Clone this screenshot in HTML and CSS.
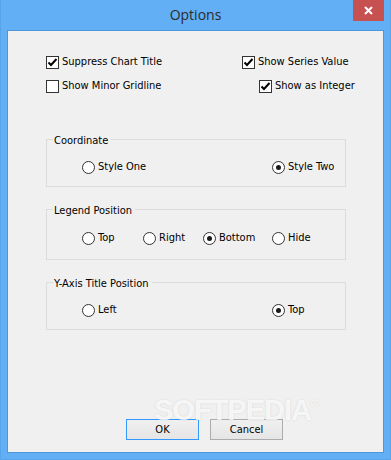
FILE: index.html
```html
<!DOCTYPE html>
<html lang="en">
<head>
    <meta charset="UTF-8">
    <meta name="viewport" content="width=device-width, initial-scale=1.0">
    <title>Options</title>
    <link rel="stylesheet" href="styles.css">
</head>
<body>

<div class="window">
    <div class="titlebar">
        <div class="title">Options</div>
        <button class="close" aria-label="Close">
            <svg width="9" height="9" viewBox="0 0 9 9"><path d="M1 1 L8 8 M8 1 L1 8" stroke="#fff" stroke-width="2" fill="none"/></svg>
        </button>
    </div>

    <div class="panel">
        <div class="checks">
            <label class="check"><span class="box"><svg width="11" height="11" viewBox="0 0 11 11"><path d="M1.5 5.5 L4 8 L9.5 2" stroke="#000" stroke-width="2" fill="none"/></svg></span>Suppress Chart Title</label>
            <label class="check"><span class="box"><svg width="11" height="11" viewBox="0 0 11 11"><path d="M1.5 5.5 L4 8 L9.5 2" stroke="#000" stroke-width="2" fill="none"/></svg></span>Show Series Value</label>
            <label class="check"><span class="box"></span>Show Minor Gridline</label>
            <label class="check indent"><span class="box"><svg width="11" height="11" viewBox="0 0 11 11"><path d="M1.5 5.5 L4 8 L9.5 2" stroke="#000" stroke-width="2" fill="none"/></svg></span>Show as Integer</label>
        </div>

        <div class="group">
            <div class="group-title">Coordinate</div>
            <div class="radios two">
                <label class="radio"><span class="dot"></span>Style One</label>
                <label class="radio"><span class="dot on"></span>Style Two</label>
            </div>
        </div>

        <div class="group tall">
            <div class="group-title">Legend Position</div>
            <div class="radios four">
                <label class="radio"><span class="dot"></span>Top</label>
                <label class="radio"><span class="dot"></span>Right</label>
                <label class="radio"><span class="dot on"></span>Bottom</label>
                <label class="radio"><span class="dot"></span>Hide</label>
            </div>
        </div>

        <div class="group">
            <div class="group-title">Y-Axis Title Position</div>
            <div class="radios two">
                <label class="radio"><span class="dot"></span>Left</label>
                <label class="radio"><span class="dot on"></span>Top</label>
            </div>
        </div>

        <div class="buttons">
            <button class="btn default">OK</button>
            <button class="btn">Cancel</button>
        </div>

        <div class="watermark">SOFTPEDIA<sup>®</sup></div>
    </div>
</div>

</body>
</html>
```

FILE: styles.css
```css
body {
    margin: 0;
    font-family: 'DejaVu Sans Condensed', 'DejaVu Sans', sans-serif;
    font-stretch: condensed;
    font-size: 11px;
    color: #000;
}

.window {
    width: 391px;
    height: 460px;
    box-sizing: border-box;
    background-color: #62aff5;
    border: 1px solid #58a4ea;
    border-top: none;
    display: flex;
    flex-direction: column;
}

.titlebar {
    height: 30px;
    display: grid;
    grid-template-columns: 1fr auto 1fr;
}

.title {
    grid-column: 2;
    font-family: 'Open Sans', sans-serif;
    font-stretch: normal;
    font-size: 14px;
    line-height: 30px;
    color: #2b2b2b;
}

.close {
    grid-column: 3;
    justify-self: end;
    align-self: start;
    width: 31px;
    height: 21px;
    margin-right: 6px;
    padding: 0;
    border: none;
    background-color: #c75050;
    display: flex;
    justify-content: center;
    align-items: center;
}

.panel {
    position: relative;
    flex: 1;
    margin: 0 6px 6px 6px;
    border: 1px solid #4e96da;
    background-color: #f0f0f0;
    display: flex;
    flex-direction: column;
    padding-left: 38px;
}

.checks {
    display: grid;
    grid-template-columns: 196px auto;
    row-gap: 10px;
    padding-top: 24px;
}

.check,
.radio {
    display: flex;
    align-items: center;
    gap: 3px;
    height: 14px;
    line-height: 14px;
    white-space: nowrap;
}

.indent {
    margin-left: 17px;
}

.box {
    width: 11px;
    height: 11px;
    border: 1px solid #333;
    background-color: #fff;
    display: flex;
}

.group {
    width: 300px;
    box-sizing: border-box;
    border: 1px solid #dcdcdc;
    margin-top: 22px;
    padding: 0 0 12px 35px;
}

.checks + .group {
    margin-top: 46px;
}

.group.tall {
    padding-bottom: 14px;
}

.group-title {
    width: fit-content;
    margin: -6px 0 0 -29px;
    padding: 0 3px 0 1px;
    line-height: 14px;
    background-color: #f0f0f0;
}

.radios {
    display: grid;
    margin-top: 12px;
}

.tall .radios {
    margin-top: 13px;
}

.radios.two {
    grid-template-columns: 190px auto;
}

.radios.four {
    grid-template-columns: 61px 60px 69px auto;
}

.dot {
    width: 11px;
    height: 11px;
    border: 1px solid #333;
    border-radius: 50%;
    background-color: #fff;
    display: flex;
    justify-content: center;
    align-items: center;
}

.dot.on::after {
    content: '';
    width: 5px;
    height: 5px;
    border-radius: 50%;
    background-color: #1a1a1a;
}

.buttons {
    margin-top: auto;
    padding: 0 0 12px 80px;
    display: flex;
    gap: 11px;
}

.btn {
    width: 73px;
    height: 21px;
    padding: 0;
    font-family: inherit;
    font-size: 11px;
    color: #000;
    border: 1px solid #acacac;
    background: linear-gradient(#f0f0f0, #e5e5e5);
}

.btn.default {
    border-color: #3399ff;
}

.watermark {
    position: absolute;
    left: 146px;
    top: 372px;
    font-family: 'Liberation Sans', sans-serif;
    font-stretch: normal;
    font-weight: bold;
    font-size: 29px;
    line-height: 14px;
    letter-spacing: -1px;
    color: rgba(255, 255, 255, 0.8);
    text-shadow: 0 0 2px rgba(0, 0, 0, 0.12);
    pointer-events: none;
}

.watermark sup {
    font-size: 11px;
    line-height: 0;
    vertical-align: top;
}
```
